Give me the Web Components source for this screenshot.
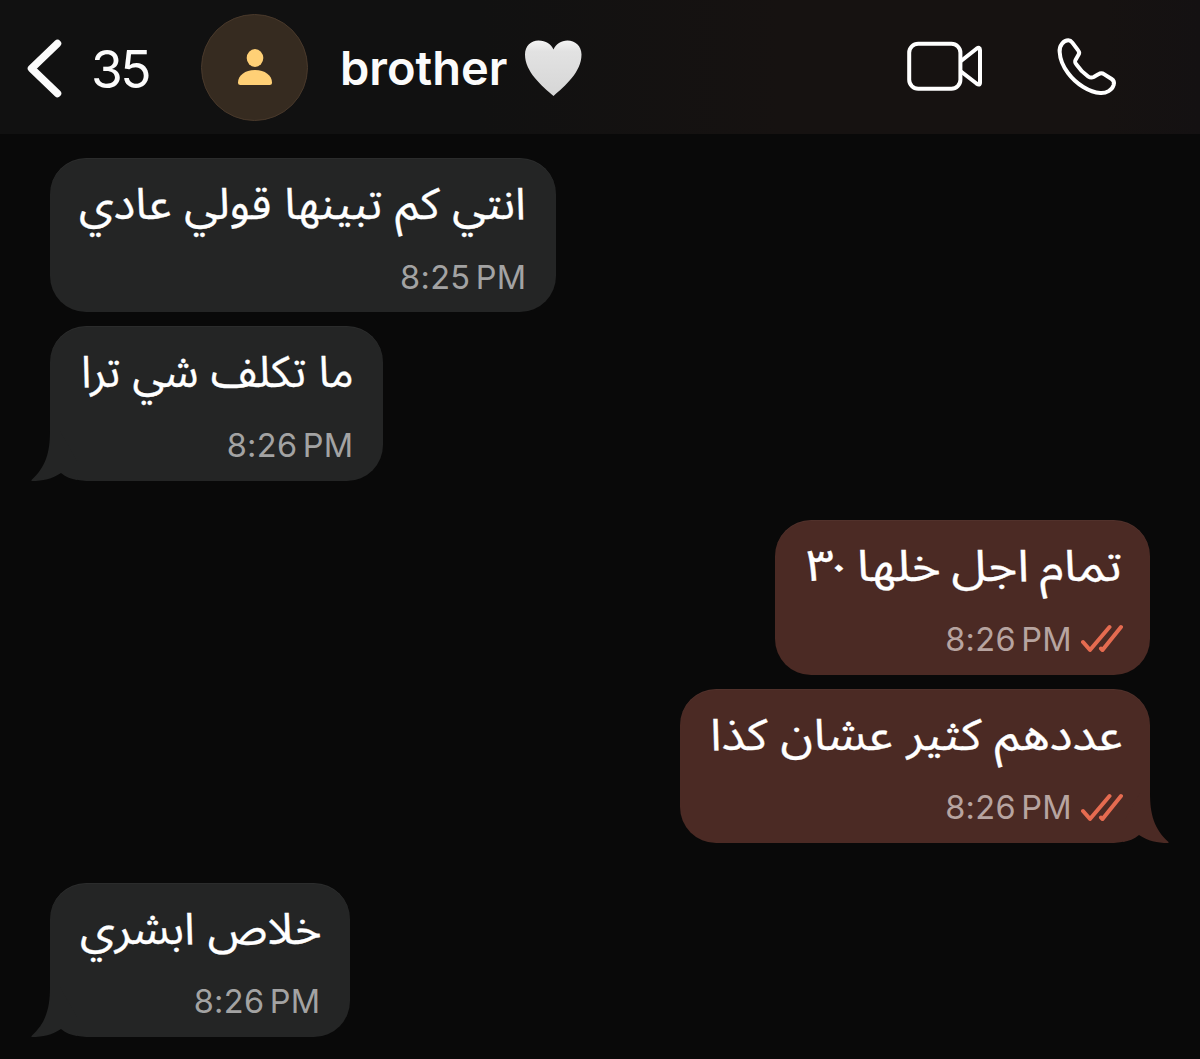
<!DOCTYPE html>
<html lang="ar">
<head>
<meta charset="utf-8">
<title>brother</title>
<style>
html,body{margin:0;padding:0;background:#090909}
body{width:1200px;height:1059px;overflow:hidden;font-family:Inter,"Noto Sans Arabic","Noto Sans","DejaVu Sans",sans-serif}
.num{font-variant-numeric:proportional-nums}
</style>
</head>
<body>
<chat-screen>
  <chat-header slot="header" unread="35"><span>brother</span></chat-header>
  <chat-group>
    <chat-bubble time="8:25 PM" style="--w:506px;--tw:447px">انتي كم تبينها قولي عادي</chat-bubble>
    <chat-bubble time="8:26 PM" tail style="--w:333px;--tw:273px;--shift:.5px">ما تكلف شي ترا</chat-bubble>
  </chat-group>
  <chat-group out>
    <chat-bubble out time="8:26 PM" style="--w:375px;--tw:317px;--ws:-3px">تمام اجل خلها <span class="num">٣٠</span></chat-bubble>
    <chat-bubble out time="8:26 PM" tail style="--w:470px;--tw:413px">عددهم كثير عشان كذا</chat-bubble>
  </chat-group>
  <chat-group>
    <chat-bubble time="8:26 PM" tail style="--w:300px;--tw:242px;--shift:1.5px">خلاص ابشري</chat-bubble>
  </chat-group>
</chat-screen>
<script>
class ChatScreen extends HTMLElement{
  constructor(){super();this.attachShadow({mode:'open'}).innerHTML=`
  <style>
  :host{display:flex;flex-direction:column;width:1200px;height:1059px;background:#090909}
  main{display:flex;flex-direction:column;gap:39.600px;padding:24px 50px 0}
  </style><slot name="header"></slot><main><slot></slot></main>`}
}
class ChatHeader extends HTMLElement{
  constructor(){super();this.attachShadow({mode:'open'}).innerHTML=`
  <style>
  :host{display:flex;align-items:center;box-sizing:border-box;height:134px;padding:0 83px 0 26px;color:#fbfbfb;
    background:linear-gradient(90deg,#111 0,#111 40%,#161211 65%,#161211 92%,#141112 100%)}
  svg{display:block;flex:none}
  .count{font-size:51.5px;line-height:60px;width:60px;margin:3px 0 0 27px;letter-spacing:-2.600px;white-space:nowrap}
  .avatar{box-sizing:border-box;width:107px;height:107px;border-radius:50%;margin:1px 0 0 50px;background:#362b20;border:1px solid #49392b;display:flex;justify-content:center}
  .name{font-size:47px;line-height:60px;font-weight:600;margin:1px 0 0 32px;white-space:nowrap;width:171px}
  .heart{margin:3px 0 0 14px}
  .actions{display:flex;align-items:center;gap:73px;margin-left:auto}
  </style>
  <svg width="38" height="60" viewBox="26 38 38 60" style="margin-top:2px"><path d="M57.500 43.500 31.500 68.500 57.500 93.500" fill="none" stroke="#fbfbfb" stroke-width="7.500" stroke-linecap="round" stroke-linejoin="round"/></svg>
  <div class="count"></div>
  <div class="avatar"><svg width="105" height="105" viewBox="202 15 105 105"><ellipse cx="255" cy="58" rx="8.300" ry="9" fill="#ffd076"/><path d="M238 82.500C238 75.500 245 70 255 70S272 75.500 272 82.500Q272 85 269.500 85H240.500Q238 85 238 82.500Z" fill="#ffd076"/></svg></div>
  <div class="name"><slot></slot></div>
  <svg class="heart" width="57" height="58" viewBox="525 40 57 58">
    <defs><linearGradient id="hg" x1="0" y1="0" x2="0" y2="1"><stop offset="0" stop-color="#f4f4f4"/><stop offset=".2" stop-color="#e2e2e2"/><stop offset="1" stop-color="#d6d6d6"/></linearGradient></defs>
    <path d="M553.500 96C542 86 525 72 525 54.500C525 46 531 40.500 538.500 40.500C546 40.500 551 44 553.500 49.500C556 44 561 40.500 567.500 40.500C575 40.500 581.500 46 581.500 54.500C581.500 72 565 86 553.500 96Z" fill="url(#hg)"/>
  </svg>
  <div class="actions">
    <svg width="77" height="58" viewBox="906 38 77 58" fill="none" stroke="#fff" stroke-width="4" stroke-linejoin="round"><rect x="909.200" y="43.700" width="51.200" height="45" rx="9"/><path d="M961 61 976.500 48.700Q980 46.500 980 50V82.500Q980 86 976.500 83.500L961 71.500"/></svg>
    <svg style="margin-top:-2px" width="61" height="58" viewBox="529 80 183 174" fill="none" stroke="#fff" stroke-width="12" stroke-linejoin="round" overflow="visible"><path d="M540 125C538 105 552 90 566 90C572 90 575 93 578 97L596 121C600 126 599 130 596 134L588 148C585 154 585 156 590 162C600 177 612 189 625 198C632 203 636 203 642 200L656 192C662 188 668 188 674 192L696 206C704 211 704 217 702 224C697 240 680 249 662 248C630 246 590 222 565 188C550 168 541 145 540 125Z"/></svg>
  </div>`}
  connectedCallback(){this.shadowRoot.querySelector('.count').textContent=this.getAttribute('unread')}
}
class ChatGroup extends HTMLElement{
  constructor(){super();this.attachShadow({mode:'open'}).innerHTML=`
  <style>:host{display:flex;flex-direction:column;align-items:flex-start;gap:14px}:host([out]){align-items:flex-end}</style><slot></slot>`}
}
class ChatBubble extends HTMLElement{
  constructor(){super();this.attachShadow({mode:'open'}).innerHTML=`
  <style>
  :host{--bg:#242525;--meta:#a3a3a3;display:flex;flex-direction:column;align-items:flex-end;position:relative;box-sizing:border-box;width:var(--w);height:154.400px;padding:10px 30px 0;border-radius:36px;background:var(--bg);color:#fff;box-shadow:inset 0 1px 0 rgba(255,255,255,.035)}
  :host([out]){--bg:#4b2a24;--meta:#b7a4a0;padding-right:28px}
  .text{direction:rtl;white-space:nowrap;font-size:44px;line-height:70px;height:70px;width:var(--tw);word-spacing:var(--ws,0px);margin-right:calc(-1*var(--shift,0px));-webkit-text-stroke:.3px #fff}
  .text>span{display:inline-block;transform-origin:100% 50%}
  .meta{display:flex;align-items:center;gap:9px;height:40px;margin-top:19.500px;color:var(--meta);font-size:32.500px;line-height:40px;letter-spacing:.3px;word-spacing:-4px;white-space:nowrap;margin-right:-.5px}
  :host([out]) .meta{margin-right:-1px}
  .ticks,.tail{display:none}
  :host([out]) .ticks{display:block;margin-top:-1px}
  :host([tail]) .tail{display:block;position:absolute;left:-19px;bottom:0}
  :host([tail][out]) .tail{left:auto;right:-19px;transform:scaleX(-1)}
  </style>
  <svg class="tail" width="46" height="50" viewBox="31 430 46 50"><path d="M50 430C50 451 46 466 31.500 479Q31 480 32 480C43 480 52 478 61 472C66 476 71 478 77 479V460L60 430Z" fill="var(--bg)"/></svg>
  <div class="text"><span><slot></slot></span></div>
  <div class="meta"><time></time><svg class="ticks" width="42" height="30" viewBox="1081 624 42 30" fill="none" stroke="#e56b50" stroke-width="4" stroke-linecap="round" stroke-linejoin="round"><path d="M1083 642 1090 650 1109.500 627M1101 648.500 1102.500 650 1121 627"/></svg></div>`}
  connectedCallback(){
    this.shadowRoot.querySelector('time').textContent=this.getAttribute('time');
    const span=this.shadowRoot.querySelector('.text>span');
    const want=parseFloat(getComputedStyle(this).getPropertyValue('--tw'));
    span.style.transform='scaleX('+(want/span.offsetWidth)+')';
  }
}
customElements.define('chat-screen',ChatScreen);
customElements.define('chat-header',ChatHeader);
customElements.define('chat-group',ChatGroup);
customElements.define('chat-bubble',ChatBubble);
</script>
</body>
</html>
